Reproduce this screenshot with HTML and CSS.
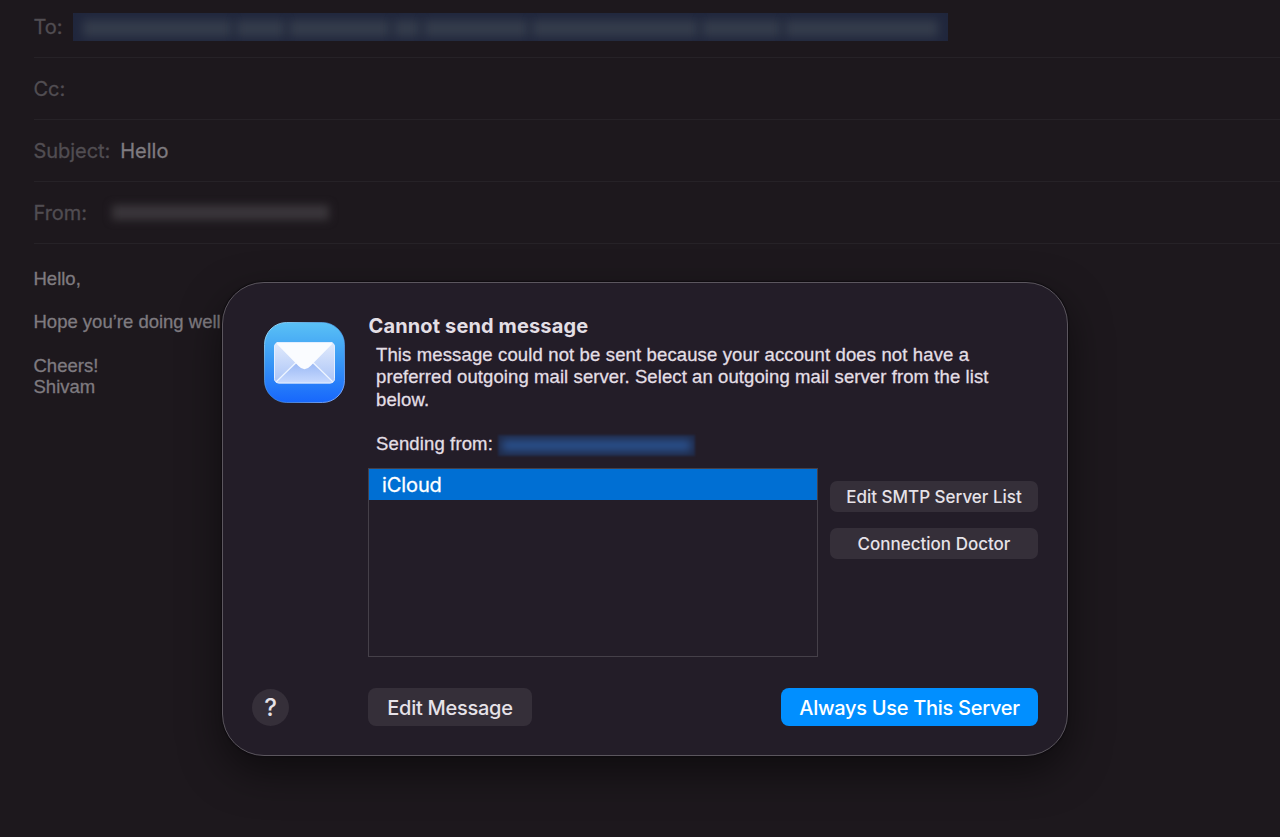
FILE: index.html
```
<!DOCTYPE html>
<html lang="en">
<head>
  <meta charset="UTF-8" />
  <meta name="viewport" content="width=device-width, initial-scale=1" />
  <title>Hello</title>
  <link rel="stylesheet" href="styles.css">
</head>
<body>
  <main class="compose">
    <div class="fields">
      <div class="field">
        <span class="label">To:</span>
        <div class="recipients">
          <i class="w1"></i><i class="w2"></i><i class="w3"></i><i class="w4"></i><i class="w5"></i><i class="w6"></i><i class="w7"></i><i class="w8"></i>
        </div>
      </div>
      <div class="field"><span class="label">Cc:</span></div>
      <div class="field"><span class="label">Subject:</span><span class="value">Hello</span></div>
      <div class="field">
        <span class="label">From:</span>
        <div class="sender"></div>
      </div>
    </div>
    <div class="message">
      <p>Hello,</p>
      <p>Hope you’re doing well.</p>
      <p>Cheers!<br>Shivam</p>
    </div>
  </main>

  <section class="dialog" role="alertdialog" aria-labelledby="dialogTitle">
    <div class="dialog-top">
      <svg class="mail-icon" viewBox="0 0 81 81" width="81" height="81" aria-hidden="true">
        <defs>
          <linearGradient id="blue" x1="0" y1="0" x2="0" y2="1">
            <stop offset="0" stop-color="#5ac1f5" />
            <stop offset="0.45" stop-color="#3b9bf5" />
            <stop offset="1" stop-color="#1767fc" />
          </linearGradient>
          <linearGradient id="rim" x1="0" y1="0" x2="1" y2="1">
            <stop offset="0" stop-color="#a0e5ff" />
            <stop offset="0.5" stop-color="#4a9cf5" stop-opacity="0.5" />
            <stop offset="1" stop-color="#88adff" />
          </linearGradient>
          <linearGradient id="paper" x1="0" y1="0" x2="0" y2="1">
            <stop offset="0" stop-color="#e2ebfc" />
            <stop offset="1" stop-color="#a9c3f7" />
          </linearGradient>
          <linearGradient id="fold" x1="0" y1="0" x2="0" y2="1">
            <stop offset="0" stop-color="#9bb9f5" />
            <stop offset="1" stop-color="#c8daff" />
          </linearGradient>
          <clipPath id="envelope"><rect x="10" y="20" width="61" height="41.5" rx="5" /></clipPath>
        </defs>
        <rect x="0.5" y="0.5" width="80" height="80" rx="22" fill="url(#blue)" stroke="url(#rim)" />
        <g clip-path="url(#envelope)">
          <rect x="10" y="20" width="61" height="42" fill="url(#paper)" />
          <path d="M11 61 L33 41 Q40.500 50 48 41 L70 61Z" fill="url(#fold)" />
          <path d="M12 60 L32 40.500 M69 60 L49 40.500" stroke="#eef5ff" stroke-width="1.200" fill="none" />
          <path d="M11 20 H70 L46.500 44 Q40.500 50.500 34.500 44Z" fill="#fafcff" />
        </g>
        <rect x="10.500" y="20.500" width="60" height="40.500" rx="4.500" fill="none" stroke="#e3eeff" />
      </svg>
      <div class="content">
        <h1 id="dialogTitle">Cannot send message</h1>
        <div class="copy">
          <div class="line-wide">This message could not be sent because your account does not have a</div>
          <div>preferred outgoing mail server. Select an outgoing mail server from the list</div>
          <div class="line-wide">below.</div>
        </div>
        <div class="sending">
          <span class="line-wide">Sending from:</span>
          <div class="account"><i></i></div>
        </div>
        <div class="servers">
          <ul class="server-list">
            <li class="selected">iCloud</li>
          </ul>
          <div class="server-actions">
            <button class="small">Edit SMTP Server List</button>
            <button class="small">Connection Doctor</button>
          </div>
        </div>
      </div>
    </div>
    <div class="dialog-footer">
      <button class="help" aria-label="Help">?</button>
      <button class="edit">Edit Message</button>
      <button class="primary">Always Use This Server</button>
    </div>
  </section>
</body>
</html>
```
FILE: styles.css
```
* {
  box-sizing: border-box;
}

body {
  margin: 0;
  height: 837px;
  overflow: hidden;
  position: relative;
  background: #1d181d;
  color: #e3dfe5;
  font-family: Inter, "Liberation Sans", sans-serif;
}

.compose {
  padding-left: 33.5px;
}

.field {
  display: flex;
  align-items: center;
  height: 62px;
  border-bottom: 1px solid #262227;
  font-size: 20px;
}
.field:first-child {
  height: 58px;
  padding-bottom: 3px;
}
.label {
  color: #514d52;
  letter-spacing: -0.05px;
  -webkit-text-stroke: 0.3px;
}
.value {
  margin-left: 10px;
  color: #7f7b80;
  -webkit-text-stroke: 0.3px;
}

/* hidden addresses */
.recipients {
  display: flex;
  align-items: center;
  gap: 4px;
  width: 875px;
  height: 28px;
  margin-left: 11px;
  padding: 0 10px;
  overflow: hidden;
  background: #20263c;
  filter: blur(0.7px);
}
.recipients i {
  height: 17px;
  margin-top: 2px;
  background: #343c4b;
  filter: blur(5px);
}
.w1 { width: 149px; }
.w2 { width: 49px; }
.w3 { width: 101px; }
.w4 { width: 26px; }
.w5 { width: 104px; }
.w6 { width: 166px; }
.w7 { width: 79px; }
.w8 { flex: 1; }

.sender {
  width: 217px;
  height: 15px;
  margin-left: 25px;
  background: #3a363b;
  filter: blur(4px);
}

.message {
  padding-top: 24px;
  color: #7f7b80;
  font-family: "Liberation Sans", Arial, sans-serif;
  font-size: 18.5px;
  line-height: 21.7px;
  -webkit-text-stroke: 0.3px;
}
.message p {
  margin: 0 0 21.7px;
}

.dialog {
  position: absolute;
  left: 222px;
  top: 282px;
  width: 846px;
  height: 474px;
  padding: 39px 29px 29px;
  display: flex;
  flex-direction: column;
  justify-content: space-between;
  background: #231d28;
  border: 1px solid #5b565e;
  border-radius: 42px;
  box-shadow: 0 0 1px 1px #0f0c10, 0 16px 40px rgba(0, 0, 0, 0.5);
}

.dialog-top {
  display: flex;
  align-items: flex-start;
  gap: 23px;
  padding-left: 12px;
}
.mail-icon {
  flex: none;
}
.content {
  flex: 1;
}

h1 {
  margin: -8px 0 0;
  padding-left: 0.5px;
  font-size: 20px;
  line-height: 24px;
  font-weight: 700;
  letter-spacing: 0.13px;
}

.copy,
.sending {
  padding-left: 8px;
  font-family: "Liberation Sans", Arial, sans-serif;
  font-size: 18.5px;
  line-height: 22.3px;
  letter-spacing: 0.09px;
  white-space: nowrap;
  -webkit-text-stroke: 0.3px;
}
.line-wide {
  letter-spacing: 0.135px;
}
.copy {
  margin-top: 6px;
}
.sending {
  display: flex;
  align-items: flex-start;
  height: 24px;
  margin-top: 22px;
}

.account {
  display: flex;
  align-items: center;
  width: 197px;
  height: 21px;
  margin-top: 2px;
  margin-left: 5px;
  padding: 0 4px;
  overflow: hidden;
  background: #202945;
  filter: blur(1.2px);
}
.account i {
  flex: 1;
  height: 11px;
  background: #2a5290;
  filter: blur(4px);
}

.servers {
  display: flex;
  gap: 12px;
  margin-top: 11px;
}
.server-list {
  width: 450px;
  height: 189px;
  margin: 0;
  padding: 0;
  list-style: none;
  border: 1px solid #454049;
}
.selected {
  height: 31px;
  padding-left: 13px;
  background: #006fd3;
  color: #fff;
  font-size: 20px;
  line-height: 32px;
  letter-spacing: -0.1px;
  -webkit-text-stroke: 0.3px;
}
.server-actions {
  display: flex;
  flex-direction: column;
  gap: 16px;
  flex: 1;
  padding-top: 13px;
}

button {
  padding: 0;
  border: none;
  border-radius: 8px;
  background: #352f39;
  color: #e6e2e8;
  font-family: inherit;
  font-weight: 500;
  white-space: nowrap;
}
.small {
  height: 31px;
  padding-top: 1px;
  border-radius: 7px;
  font-size: 17px;
}

.dialog-footer {
  display: flex;
  align-items: center;
}
.help {
  width: 37px;
  height: 37px;
  border-radius: 50%;
  font-size: 24px;
}
.edit,
.primary {
  height: 38px;
  padding-top: 1px;
  font-size: 20px;
  letter-spacing: -0.28px;
}
.edit {
  width: 164px;
  margin-left: 79px;
}
.primary {
  width: 257px;
  margin-left: auto;
  background: #018fff;
  color: #fff;
}
```
